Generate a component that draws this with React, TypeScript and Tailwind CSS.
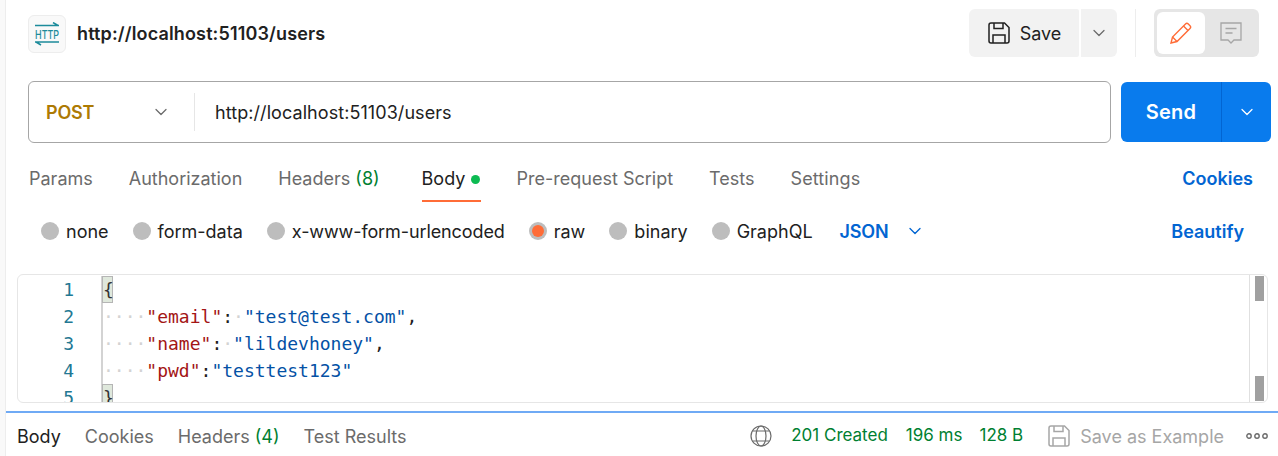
import { ChevronDown } from "lucide-react";

const tabs = ["Params", "Authorization"];

function SaveIcon({ className }: { className: string }) {
  return (
    <svg viewBox="0 0 22 22" fill="none" stroke="currentColor" strokeWidth="1.5" className={className}>
      <path d="M1 3a2 2 0 0 1 2-2h13.5L21 5.5V19a2 2 0 0 1-2 2H3a2 2 0 0 1-2-2z" />
      <path d="M6 1v5.5h9V1" />
      <path d="M5 21v-8h12v8" />
    </svg>
  );
}

function Radio({ on, label, tight }: { on?: boolean; label: string; tight?: boolean }) {
  return (
    <div className="flex items-center gap-[7px]">
      {on ? (
        <span className="flex h-[18px] w-[18px] items-center justify-center rounded-full bg-[#bdbdbd]">
          <span className="h-3 w-3 rounded-full bg-[#ff6c37]" />
        </span>
      ) : (
        <span className="h-[18px] w-[18px] rounded-full bg-[#bdbdbd]" />
      )}
      <span className={tight ? "tracking-[-0.1px]" : ""}>{label}</span>
    </div>
  );
}

function Brace({ ch }: { ch: string }) {
  return (
    <span className="ml-[-1px] mr-[-0.2px] inline-block h-[27px] w-[11px] border border-[#b5b5b5] bg-[#dfe8dc] leading-[25px] text-[#333]">
      {ch}
    </span>
  );
}

export default function App() {
  return (
    <div className="h-[456px] w-[1278px] overflow-hidden bg-white font-['Inter',sans-serif] text-[18px] text-[#212121]">
      <div className="relative ml-[5px] h-full border-l border-[#ededed]">
        <div className="absolute left-[-6px] top-0 h-full w-[5px] bg-[#f9f9f9]" />

        {/* top bar */}
        <div className="flex h-[66px] items-center pl-[22px] pr-[19px]">
          <div className="mt-[1px] flex h-[38px] w-[38px] items-center justify-center rounded-[6px] border border-[#ededed] bg-[#f9f9f9]">
            <svg viewBox="0 0 34 24" fill="none" stroke="#1c8b9b" strokeWidth="1.5" className="h-[24px] w-[34px] shrink-0">
              <path d="M5 3.5h24M23 .5l5 3" />
              <path d="M5 20h24M6 20l5 3" />
              <text x="17" y="17" textAnchor="middle" fontSize="12" fontWeight="500" textLength="24" lengthAdjust="spacingAndGlyphs" fill="#1c8b9b" stroke="none" fontFamily="Inter, sans-serif">
                HTTP
              </text>
            </svg>
          </div>
          <span className="ml-[11px] font-semibold tracking-[0.14px]">http://localhost:51103/users</span>
          <div className="ml-auto flex items-center">
            <div className="flex h-[48px] w-[110px] items-center justify-center gap-[10px] rounded-l-[6px] rounded-r-[2px] bg-[#f2f2f2] pl-[1px]">
              <SaveIcon className="h-[22px] w-[22px] text-[#212121]" />
              <span>Save</span>
            </div>
            <div className="ml-[2px] flex h-[48px] w-[36px] items-center justify-center rounded-r-[6px] bg-[#f2f2f2]">
              <ChevronDown size={20} strokeWidth={1.5} className="text-[#6b6b6b]" />
            </div>
            <div className="mx-[18px] h-[48px] w-px bg-[#ededed]" />
            <div className="flex h-[48px] w-[105px] items-center rounded-[6px] bg-[#e6e6e6] p-[3px]">
              <div className="flex h-[42px] w-[48px] items-center justify-center rounded-[6px] bg-white">
                <svg viewBox="0 0 22 22" fill="none" stroke="#ff6c37" strokeWidth="1.4" className="h-[22px] w-[22px]">
                  <path d="M1 21l1.5-6L15.5 2a2 2 0 0 1 2.8 0l1.7 1.7a2 2 0 0 1 0 2.8L7 19.5z" />
                  <path d="M13.5 4l4.5 4.5M2.5 15 7 19.5" />
                </svg>
              </div>
              <div className="flex flex-1 items-center justify-center">
                <svg viewBox="0 0 22 22" fill="none" stroke="#a6a6a6" strokeWidth="1.3" className="h-[22px] w-[22px]">
                  <path d="M1 1h20v17h-7l-3 3-3-3H1z" />
                  <path d="M5.5 6.5h11M5.5 11h7" />
                </svg>
              </div>
            </div>
          </div>
        </div>

        {/* url row */}
        <div className="mt-[15px] flex items-center pl-[22px] pr-[6px]">
          <div className="flex h-[62px] w-[1083px] items-center rounded-[6px] border border-[#a6a6a6]">
            <div className="flex h-[38px] w-[166px] items-center justify-between border-r border-[#e6e6e6] pl-[17px] pr-[23px]">
              <span className="font-semibold tracking-[-0.2px] text-[#ad7a03]">POST</span>
              <ChevronDown size={20} strokeWidth={1.5} className="text-[#6b6b6b]" />
            </div>
            <span className="ml-[20px] tracking-[0.07px]">http://localhost:51103/users</span>
          </div>
          <div className="ml-[10px] flex h-[60px] w-[150px] items-center rounded-[6px] bg-[#097bed] text-white">
            <span className="flex h-full w-[101px] items-center justify-center border-r border-[#0265d2] text-[20px] font-semibold tracking-[0.2px]">Send</span>
            <span className="flex flex-1 items-center justify-center">
              <ChevronDown size={20} strokeWidth={1.5} />
            </span>
          </div>
        </div>

        {/* request tabs */}
        <div className="mt-[21px] flex h-[38px] items-start pl-[23px] pr-[25px] pt-px text-[#6b6b6b]">
          <div className="flex gap-[36px] leading-[28px]">
            {tabs.map((t) => (
              <span key={t}>{t}</span>
            ))}
            <span>
              Headers <span className="text-[#007f31]">(8)</span>
            </span>
            <div className="ml-[6px] flex h-[37px] w-[59px] items-start gap-[6px] border-b-[2px] border-[#ff6c37] text-[#212121]">
              <span>Body</span>
              <span className="mt-[10px] h-[9px] w-[9px] rounded-full bg-[#0cbb52]" />
            </div>
            <span>Pre-request Script</span>
            <span>Tests</span>
            <span className="tracking-[0.1px]">Settings</span>
          </div>
          <span className="ml-auto font-semibold leading-[28px] text-[#0265d2]">Cookies</span>
        </div>

        {/* body types */}
        <div className="mt-[15px] flex h-[28px] items-center pl-[35px] pr-[34px]">
          <div className="flex items-center gap-[24px]">
            <Radio label="none" />
            <Radio label="form-data" />
            <Radio tight label="x-www-form-urlencoded" />
            <Radio on label="raw" />
            <Radio label="binary" />
            <Radio label="GraphQL" />
          </div>
          <span className="ml-[27px] font-semibold tracking-[-0.2px] text-[#0265d2]">JSON</span>
          <ChevronDown size={20} strokeWidth={1.6} className="ml-[17px] text-[#0265d2]" />
          <span className="ml-auto font-semibold text-[#0265d2]">Beautify</span>
        </div>

        {/* editor */}
        <div className="relative ml-[11px] mt-[29px] h-[129px] w-[1251px] overflow-hidden rounded-[6px] border border-[#e6e6e6] font-['DejaVu_Sans_Mono',monospace] leading-[27px]">
          <div className="flex pt-px">
            <div className="w-[83px] pr-[27px] text-right text-[#237893]">
              {[1, 2, 3, 4, 5].map((n) => (
                <div key={n} className="h-[27px]">{n}</div>
              ))}
            </div>
            <div className="whitespace-pre border-l-[2px] border-[#d3d3d3]">
              <div className="h-[27px]"><Brace ch="{" /></div>
              <div className="h-[27px]">
                <span className="text-[#d3d3d3]">····</span>
                <span className="text-[#a31515]">"email"</span>
                <span>:</span>
                <span className="text-[#d3d3d3]">·</span>
                <span className="text-[#0451a5]">"test@test.com"</span>
                <span>,</span>
              </div>
              <div className="h-[27px]">
                <span className="text-[#d3d3d3]">····</span>
                <span className="text-[#a31515]">"name"</span>
                <span>:</span>
                <span className="text-[#d3d3d3]">·</span>
                <span className="text-[#0451a5]">"lildevhoney"</span>
                <span>,</span>
              </div>
              <div className="h-[27px]">
                <span className="text-[#d3d3d3]">····</span>
                <span className="text-[#a31515]">"pwd"</span>
                <span>:</span>
                <span className="text-[#0451a5]">"testtest123"</span>
              </div>
              <div className="h-[27px]"><Brace ch="}" /></div>
            </div>
          </div>
          {/* scrollbar marks */}
          <div className="absolute bottom-0 right-0 top-0 w-[18px] border-l border-[#e0e0e0]">
            <div className="absolute left-[5px] top-px h-[25px] w-[9px] bg-[#a0a0a0]" />
            <div className="absolute bottom-px left-[5px] h-[25px] w-[9px] bg-[#a0a0a0]" />
          </div>
        </div>

        {/* response bar */}
        <div className="mt-[8px] flex h-[45px] items-center border-t-[2px] border-[#6faaf5] pl-[11px] pr-[10px] pt-[3px] text-[#6b6b6b]">
          <span className="text-[#212121]">Body</span>
          <span className="ml-[24px]">Cookies</span>
          <span className="ml-[24px]">
            Headers <span className="text-[#007f31]">(4)</span>
          </span>
          <span className="ml-[24px]">Test Results</span>
          <div className="ml-auto flex items-center">
            <svg viewBox="0 0 22 22" fill="none" stroke="#6b6b6b" strokeWidth="1.2" className="h-[22px] w-[22px]">
              <circle cx="11" cy="11" r="10" />
              <ellipse cx="11" cy="11" rx="5" ry="10" />
              <path d="M2.5 6h17M2.5 16h17" />
            </svg>
            <span className="ml-[19px] text-[17px] text-[#007f31]">201 Created</span>
            <span className="ml-[18px] text-[17px] text-[#007f31]">196 ms</span>
            <span className="ml-[17px] text-[17px] text-[#007f31]">128 B</span>
            <SaveIcon className="ml-[25px] h-[22px] w-[22px] text-[#a6a6a6]" />
            <span className="ml-[10px] text-[#a6a6a6]">Save as Example</span>
            <svg viewBox="0 0 22 6" fill="none" stroke="#6b6b6b" strokeWidth="1.4" className="ml-[22px] h-[6px] w-[22px]">
              <circle cx="3" cy="3" r="2.2" />
              <circle cx="11" cy="3" r="2.2" />
              <circle cx="19" cy="3" r="2.2" />
            </svg>
          </div>
        </div>
      </div>
    </div>
  );
}
